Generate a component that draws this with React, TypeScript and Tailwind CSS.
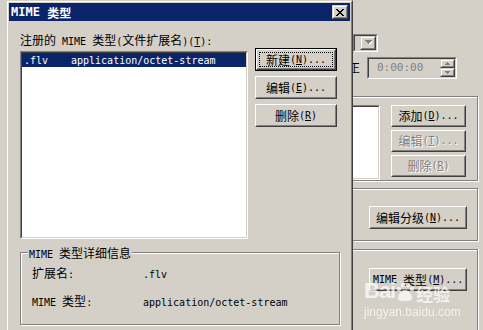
import React from "react";

const CJK = "font-['Noto_Sans_CJK_SC','Noto_Sans_CJK_JP',sans-serif] text-[12px]";
const ASC = "font-['DejaVu_Sans_Mono','Liberation_Mono',monospace] text-[10px]";

function Txt({ s }: { s: string }) {
  const out: React.ReactNode[] = [];
  let i = 0;
  let key = 0;
  let buf = "";
  let bufAscii: boolean | null = null;
  const flush = () => {
    if (buf) {
      out.push(
        <span key={key++} className={bufAscii ? ASC : CJK}>
          {buf}
        </span>
      );
      buf = "";
    }
  };
  while (i < s.length) {
    const ch = s[i];
    if (ch === "&" && i + 1 < s.length) {
      flush();
      const c = s[i + 1];
      const a = c.charCodeAt(0) < 128;
      out.push(
        <span key={key++} className={(a ? ASC : CJK) + " underline underline-offset-[1px]"}>
          {c}
        </span>
      );
      bufAscii = null;
      i += 2;
      continue;
    }
    const a = ch.charCodeAt(0) < 128;
    if (bufAscii !== null && a !== bufAscii) flush();
    bufAscii = a;
    buf += ch;
    i++;
  }
  flush();
  return <>{out}</>;
}

function Btn({ s, cls, def, dis }: { s: string; cls: string; def?: boolean; dis?: boolean }) {
  return (
    <div className={`flex shrink-0 ${cls} ${def ? "border border-black" : ""}`}>
      <div className="flex-1 flex border border-t-white border-l-white border-r-[#404040] border-b-[#404040]">
        <div className="flex-1 flex border border-t-[#d4d0c8] border-l-[#d4d0c8] border-r-[#808080] border-b-[#808080] p-[1px]">
          <div
            className={`flex-1 flex items-center justify-center leading-[13px] whitespace-pre ${
              def ? "border border-dotted border-black" : "border border-transparent"
            } ${dis ? "text-[#808080] [text-shadow:1px_1px_0_#fff]" : "text-black"}`}
          >
            <Txt s={s} />
          </div>
        </div>
      </div>
    </div>
  );
}

function Sunken({ cls, inner, children }: { cls: string; inner: string; children?: React.ReactNode }) {
  return (
    <div className={`flex border border-t-[#808080] border-l-[#808080] border-r-white border-b-white ${cls}`}>
      <div className={`flex-1 flex border border-t-[#404040] border-l-[#404040] border-r-[#d4d0c8] border-b-[#d4d0c8] ${inner}`}>
        {children}
      </div>
    </div>
  );
}

function Raised({ cls, children }: { cls: string; children?: React.ReactNode }) {
  return (
    <div className={`flex border border-t-[#d4d0c8] border-l-[#d4d0c8] border-r-[#404040] border-b-[#404040] ${cls}`}>
      <div className="flex-1 flex items-center justify-center border border-t-white border-l-white border-r-[#808080] border-b-[#808080]">
        {children}
      </div>
    </div>
  );
}

export default function App() {
  return (
    <div className="w-[483px] h-[330px] overflow-hidden bg-[#d4d0c8] flex relative text-black">
      {/* background window left strip */}
      <div className="w-[6px] shrink-0" />

      {/* MIME dialog */}
      <div className="w-[347px] h-[350px] shrink-0 flex border border-t-[#d4d0c8] border-l-[#d4d0c8] border-r-[#404040] border-b-[#404040]">
        <div className="flex-1 flex border border-t-white border-l-white border-r-[#808080] border-b-[#808080] p-[1px]">
          <div className="flex-1 flex flex-col">
            {/* title bar */}
            <div className="h-[18px] bg-[#0a246a] flex items-center justify-between pl-[2px] pr-[2px] shrink-0">
              <div className="text-white leading-[13px] whitespace-pre flex items-center">
                <span className="font-['DejaVu_Sans_Mono',monospace] text-[12px] font-bold">MIME </span>
                <span className={`${CJK} font-bold`}>类型</span>
              </div>
              <Raised cls="w-[16px] h-[14px] bg-[#d4d0c8]">
                <svg width="8" height="7" viewBox="0 0 8 7" shapeRendering="crispEdges">
                  <path
                    d="M0 0h2v1h-2zM6 0h2v1h-2zM1 1h2v1h-2zM5 1h2v1h-2zM2 2h4v1h-4zM3 3h2v1h-2zM2 4h4v1h-4zM1 5h2v1h-2zM5 5h2v1h-2zM0 6h2v1h-2zM6 6h2v1h-2z"
                    fill="#000"
                  />
                </svg>
              </Raised>
            </div>

            {/* body */}
            <div className="flex-1 flex flex-col pl-[11px]">
              <div className="flex">
                <div className="flex flex-col w-[228px]">
                  <div className="mt-[12px] h-[13px] leading-[13px] flex items-baseline whitespace-pre">
                    <Txt s="注册的 MIME 类型(文件扩展名)(&T):" />
                  </div>
                  <Sunken cls="mt-[5px] w-[228px] h-[188px]" inner="bg-white flex-col">
                    <div className="h-[14px] bg-[#0a246a] text-white flex items-center leading-[13px] whitespace-pre">
                      <span className={`${ASC} w-[49px] pl-[2px]`}>.flv</span>
                      <span className={ASC}>application/octet-stream</span>
                    </div>
                  </Sunken>
                </div>
                <div className="ml-[7px] mt-[27px] flex flex-col gap-[5px]">
                  <Btn s="新建(&N)..." cls="w-[82px] h-[23px]" def />
                  <Btn s="编辑(&E)..." cls="w-[82px] h-[23px]" />
                  <Btn s="删除(&R)" cls="w-[82px] h-[23px]" />
                </div>
              </div>

              {/* group box */}
              <div className="mt-[13px] w-[320px] h-[73px] relative border border-[#808080] shadow-[1px_1px_0_#fff,inset_1px_1px_0_#fff] pt-[13px] pl-[11px] flex flex-col gap-[15px]">
                <div className="absolute left-[7px] -top-[7px] h-[13px] px-[1px] bg-[#d4d0c8] leading-[13px] flex items-baseline whitespace-pre">
                  <Txt s="MIME 类型详细信息" />
                </div>
                <div className="h-[13px] flex items-baseline leading-[13px] whitespace-pre">
                  <div className="w-[111px]">
                    <Txt s="扩展名:" />
                  </div>
                  <span className={ASC}>.flv</span>
                </div>
                <div className="h-[13px] flex items-baseline leading-[13px] whitespace-pre">
                  <div className="w-[111px]">
                    <Txt s="MIME 类型:" />
                  </div>
                  <span className={ASC}>application/octet-stream</span>
                </div>
              </div>
            </div>
          </div>
        </div>
      </div>

      {/* background window right part */}
      <div className="flex-1 flex flex-col">
        {/* combobox fragment */}
        <Sunken cls="mt-[34px] w-[25px] h-[20px]" inner="justify-end items-stretch">
          <Raised cls="w-[16px] bg-[#d4d0c8]">
            <svg width="7" height="5" viewBox="0 0 7 5" shapeRendering="crispEdges">
              <path d="M1 1h7v1h-7zM2 2h5v1h-5zM3 3h3v1h-3zM4 4h1v1h-1z" fill="#fff" />
              <path d="M0 0h7v1h-7zM1 1h5v1h-5zM2 2h3v1h-3zM3 3h1v1h-1z" fill="#808080" />
            </svg>
          </Raised>
        </Sunken>

        {/* time row */}
        <div className="mt-[5px] h-[22px] flex items-center">
          <div className="w-[7px] overflow-hidden flex">
            <span className={`${CJK} -ml-[5px] leading-[13px] shrink-0`}>正</span>
          </div>
          <Sunken cls="ml-[7px] w-[90px] h-[22px]" inner="bg-[#d4d0c8] items-center">
            <span className={`${ASC} flex-1 pl-[8px] text-[#808080] text-[11px]`}>0:00:00</span>
            <div className="w-[15px] h-full flex flex-col">
              <Raised cls="flex-1 bg-[#d4d0c8]">
                <svg width="5" height="3" viewBox="0 0 5 3" shapeRendering="crispEdges">
                  <path d="M2 0h1v1h-1zM1 1h3v1h-3zM0 2h5v1h-5z" fill="#808080" />
                </svg>
              </Raised>
              <Raised cls="flex-1 bg-[#d4d0c8]">
                <svg width="5" height="3" viewBox="0 0 5 3" shapeRendering="crispEdges">
                  <path d="M0 0h5v1h-5zM1 1h3v1h-3zM2 2h1v1h-1z" fill="#808080" />
                </svg>
              </Raised>
            </div>
          </Sunken>
        </div>

        {/* group 1 */}
        <div className="mt-[17px] w-[125px] h-[89px] border-t border-r border-b border-[#808080] shadow-[1px_1px_0_#fff,inset_0_1px_0_#fff] flex pt-[8px]">
          <div className="w-[27px] h-[75px] flex bg-white border-t border-r border-b border-t-[#808080] border-r-white border-b-white">
            <div className="flex-1 border-t border-r border-b border-t-[#404040] border-r-[#d4d0c8] border-b-[#d4d0c8]" />
          </div>
          <div className="ml-[11px] flex flex-col gap-[3px]">
            <Btn s="添加(&D)..." cls="w-[75px] h-[22px]" />
            <Btn s="编辑(&T)..." cls="w-[75px] h-[22px]" dis />
            <Btn s="删除(&R)" cls="w-[75px] h-[22px]" dis />
          </div>
        </div>

        {/* group 2 */}
        <div className="mt-[7px] w-[125px] h-[58px] border-t border-r border-b border-[#808080] shadow-[1px_1px_0_#fff,inset_0_1px_0_#fff] flex flex-col pt-[17px] pl-[16px]">
          <Btn s="编辑分级(&N)..." cls="w-[98px] h-[23px]" />
        </div>

        {/* group 3 */}
        <div className="mt-[8px] w-[125px] h-[90px] border-t border-r border-[#808080] shadow-[1px_0_0_#fff,inset_0_1px_0_#fff] flex flex-col pt-[18px] pl-[16px]">
          <Btn s="MIME 类型(&M)..." cls="w-[98px] h-[23px]" />
        </div>
      </div>

      {/* watermark overlay */}
      <div className="absolute left-[364px] top-[280px] flex flex-col pointer-events-none opacity-70">
        <div className="flex items-end leading-none text-white">
          <span className="font-['Liberation_Sans',sans-serif] font-bold text-[22px] tracking-[-1px]">Bai</span>
          <svg width="20" height="20" viewBox="0 0 20 20" className="mb-[1px]">
            <circle cx="4" cy="8" r="2.2" fill="#fff" />
            <circle cx="8" cy="4" r="2.2" fill="#fff" />
            <circle cx="13" cy="4" r="2.2" fill="#fff" />
            <circle cx="17" cy="8" r="2.2" fill="#fff" />
            <path d="M10 9c-4 0-7 5-7 8s3 3 7 3 7 0 7-3-3-8-7-8z" fill="#fff" />
          </svg>
          <span className="font-['Noto_Sans_CJK_SC',sans-serif] font-bold text-[17px] ml-[1px]">经验</span>
        </div>
        <span className="font-['Liberation_Sans',sans-serif] text-[12px] text-white leading-[14px] mt-[3px]">
          jingyan.baidu.com
        </span>
      </div>
    </div>
  );
}
